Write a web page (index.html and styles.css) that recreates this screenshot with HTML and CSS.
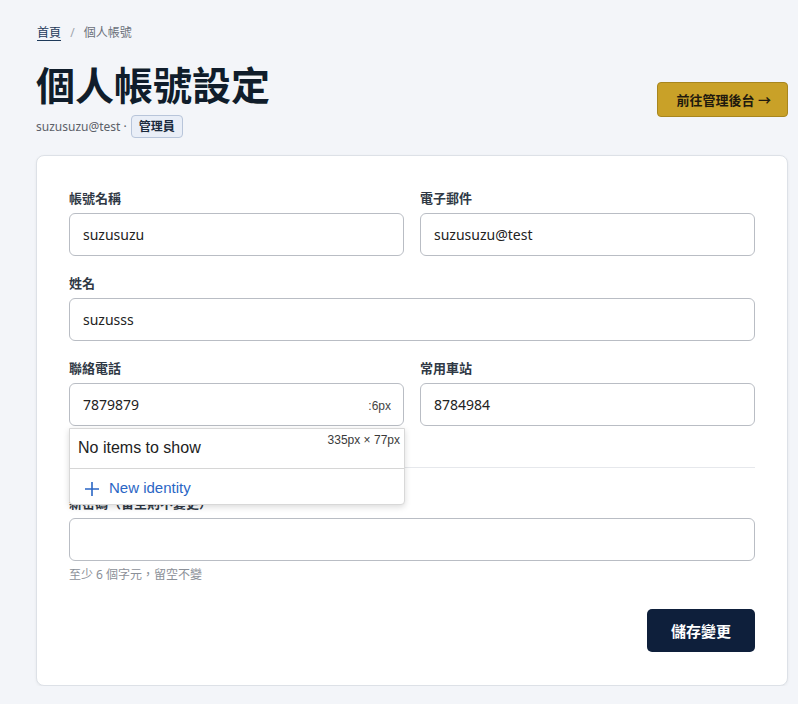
FILE: index.html
```html
<!DOCTYPE html>
<html lang="zh-Hant">

<head>
    <meta charset="UTF-8">
    <meta name="viewport" content="width=device-width, initial-scale=1.0">
    <title>個人帳號設定</title>
    <link rel="stylesheet" href="styles.css">
</head>

<body>

    <div class="page">
        <nav class="breadcrumb">
            <a href="#">首頁</a>
            <span class="sep">/</span>
            <span class="current">個人帳號</span>
        </nav>

        <div class="header">
            <div class="header-text">
                <h1>個人帳號設定</h1>
                <div class="meta">
                    <span>suzusuzu@test ·</span>
                    <span class="badge">管理員</span>
                </div>
            </div>
            <button class="btn-admin">前往管理後台 →</button>
        </div>

        <form class="card">
            <div class="grid">
                <div class="field">
                    <label for="username">帳號名稱</label>
                    <input id="username" type="text" value="suzusuzu">
                </div>
                <div class="field">
                    <label for="email">電子郵件</label>
                    <input id="email" type="text" value="suzusuzu@test">
                </div>
                <div class="field full">
                    <label for="name">姓名</label>
                    <input id="name" type="text" value="suzusss">
                </div>
                <div class="field phone">
                    <label for="phone">聯絡電話</label>
                    <input id="phone" type="text" value="7879879">
                    <span class="size-frag">:6px</span>

                    <div class="autofill">
                        <span class="size-tip">335px × 77px</span>
                        <div class="autofill-empty">No items to show</div>
                        <div class="autofill-new">
                            <svg width="16" height="16" viewBox="0 0 16 16"><path d="M8 1v14M1 8h14" stroke="#2a66c5" stroke-width="1.6" fill="none"/></svg>
                            <span>New identity</span>
                        </div>
                    </div>
                </div>
                <div class="field">
                    <label for="station">常用車站</label>
                    <input id="station" type="text" value="8784984">
                </div>
            </div>

            <div class="password">
                <div class="field">
                    <label for="password">新密碼（留空則不變更）</label>
                    <input id="password" type="password">
                    <div class="hint">至少 6 個字元，留空不變</div>
                </div>
            </div>

            <div class="actions">
                <button type="button" class="btn-save">儲存變更</button>
            </div>
        </form>
    </div>

</body>

</html>
```

FILE: styles.css
```css
body {
    margin: 0;
    padding: 0;
    background-color: #f3f5f9;
    font-family: "Noto Sans", "Noto Sans CJK TC", sans-serif;
    color: #1f2937;
}

.page {
    padding: 24px 10px 0 36px;
}

.breadcrumb {
    font-size: 12px;
    line-height: 18px;
    padding-left: 1px;
}

.breadcrumb a {
    color: #1e3a5a;
    text-decoration: underline;
    text-underline-offset: 3px;
}

.breadcrumb .sep {
    color: #a0a6ae;
    margin: 0 6px;
}

.breadcrumb .current {
    color: #6b7079;
}

.header {
    display: flex;
    justify-content: space-between;
    align-items: center;
    margin-top: 19px;
}

h1 {
    margin: 0;
    font-size: 39px;
    line-height: 48px;
    font-weight: 700;
    color: #101d2b;
}

.meta {
    display: flex;
    align-items: center;
    gap: 4px;
    margin-top: 6px;
    font-size: 12px;
    color: #5b6068;
}

.badge {
    display: inline-block;
    padding: 0 7px;
    height: 21px;
    line-height: 21px;
    font-size: 12px;
    font-weight: 700;
    color: #1b2a3c;
    background-color: #e9eef7;
    border: 1px solid #b8c5da;
    border-radius: 4px;
}

.btn-admin {
    font-family: inherit;
    font-size: 13px;
    font-weight: 700;
    color: #1f1a0e;
    background-color: #c9a128;
    border: 1px solid #a8861e;
    border-radius: 4px;
    height: 35px;
    padding: 0 16px 0 19px;
    cursor: pointer;
}

.card {
    margin-top: 17px;
    background-color: #ffffff;
    border: 1px solid #dde1e7;
    border-radius: 8px;
    box-shadow: 0 1px 3px rgba(0, 0, 0, 0.06);
    padding: 33px 32px 33px 32px;
}

.grid {
    display: grid;
    grid-template-columns: 1fr 1fr;
    column-gap: 16px;
    row-gap: 18px;
}

.field {
    display: flex;
    flex-direction: column;
}

.field.full {
    grid-column: 1 / 3;
}

.phone {
    position: relative;
}

label {
    font-size: 13px;
    line-height: 18px;
    font-weight: 700;
    color: #303945;
    margin-bottom: 6px;
}

input {
    height: 43px;
    box-sizing: border-box;
    border: 1px solid #b9bdc4;
    border-radius: 6px;
    padding: 0 13px;
    font-family: inherit;
    font-size: 14px;
    color: #222222;
    background-color: #ffffff;
}

.password {
    margin-top: 41px;
    padding-top: 26px;
    border-top: 1px solid #e6e8ec;
}

.hint {
    margin-top: 6px;
    font-size: 12px;
    line-height: 16px;
    color: #8b9098;
}

.actions {
    display: flex;
    justify-content: flex-end;
    margin-top: 26px;
}

.btn-save {
    font-family: inherit;
    font-size: 15px;
    font-weight: 700;
    color: #ffffff;
    background-color: #0e1f3b;
    border: none;
    border-radius: 5px;
    height: 43px;
    padding: 0 24px;
    cursor: pointer;
}

/* browser autofill popup and the inspector size tip, captured in the shot */
.size-frag {
    position: absolute;
    right: 13px;
    top: 40px;
    font-family: "Liberation Sans", Arial, sans-serif;
    font-size: 12px;
    color: #444444;
}

.autofill {
    position: absolute;
    left: 0;
    top: 69px;
    width: 336px;
    height: 77px;
    box-sizing: border-box;
    background-color: #ffffff;
    border: 1px solid #d8d8d8;
    border-radius: 0 0 4px 4px;
    box-shadow: 0 2px 6px rgba(0, 0, 0, 0.15);
    font-family: "Liberation Sans", Arial, sans-serif;
    z-index: 2;
}

.size-tip {
    position: absolute;
    right: 4px;
    top: 4px;
    font-size: 12px;
    color: #3a3a3a;
}

.autofill-empty {
    height: 39px;
    line-height: 38px;
    padding-left: 8px;
    font-size: 16px;
    color: #222222;
    border-bottom: 1px solid #d6d6d6;
}

.autofill-new {
    display: flex;
    align-items: center;
    gap: 9px;
    height: 36px;
    padding-left: 14px;
    font-size: 15px;
    color: #2a66c5;
}

.autofill-new svg {
    margin-top: 3px;
}
```
